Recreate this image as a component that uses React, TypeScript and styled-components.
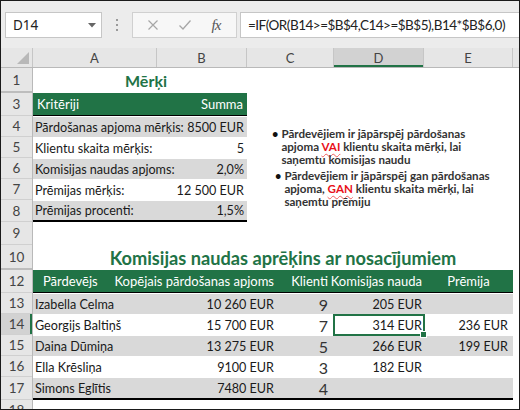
import React from "react";
import styled, { createGlobalStyle } from "styled-components";

const GlobalStyle = createGlobalStyle`
  html, body { margin: 0; padding: 0; background: #fff; }
  body { width: 520px; height: 410px; overflow: hidden; font-family: Lato, "Liberation Sans", sans-serif; }
  * { box-sizing: border-box; }
`;

const GREEN = "#217346";
const BAND = "#d9d9d9";
const CELL_FONT = `Lato, "Liberation Sans", sans-serif`;

const Frame = styled.div`
  width: 520px;
  height: 410px;
  border: 1px solid #1a1a1a;
  display: flex;
  flex-direction: column;
  overflow: hidden;
  background: #fff;
`;

/* ---------- formula bar ---------- */
const FormulaBar = styled.div`
  height: 47px;
  flex: none;
  background: #ececec;
  display: flex;
  align-items: flex-start;
  padding: 11px 0 0 4px;
`;

const NameBox = styled.div`
  width: 97px;
  height: 26px;
  background: #fff;
  border: 1px solid #c6c6c6;
  display: flex;
  align-items: center;
  justify-content: space-between;
  padding: 0 5px 0 7px;
  font-family: "Noto Sans", "Open Sans", sans-serif;
  font-size: 13.5px;
  color: #222;
`;

const Dots = styled.div`
  width: 30px;
  height: 26px;
  display: flex;
  flex-direction: column;
  align-items: center;
  justify-content: center;
  gap: 3px;
  & > span {
    width: 2px;
    height: 2px;
    background: #9a9a9a;
  }
`;

const FxBox = styled.div`
  width: 105px;
  height: 26px;
  background: #f7f7f7;
  border: 1px solid #d0d0d0;
  display: flex;
  align-items: center;
  justify-content: space-around;
  padding: 0 6px 0 4px;
`;

const FxLabel = styled.span`
  font-family: "Liberation Serif", serif;
  font-style: italic;
  font-size: 15px;
  color: #555;
  letter-spacing: -1px;
`;

const FormulaInput = styled.div`
  flex: 1;
  height: 26px;
  margin-left: 3px;
  background: #fff;
  border: 1px solid #c6c6c6;
  border-right: none;
  display: flex;
  align-items: center;
  padding-left: 7px;
  font-family: Lato, "Liberation Sans", sans-serif;
  font-size: 13.5px;
  letter-spacing: -0.5px;
  color: #222;
  white-space: nowrap;
  overflow: hidden;
`;

/* ---------- column headers ---------- */
const ColHeaderRow = styled.div`
  height: 20px;
  flex: none;
  display: flex;
  background: #e6e6e6;
  border-bottom: 1px solid #b9b9b9;
`;

const Corner = styled.div`
  width: 32px;
  flex: none;
  border-right: 1px solid #c6c6c6;
  display: flex;
  align-items: flex-end;
  justify-content: flex-end;
  padding: 0 3px 3px 0;
`;

const ColHead = styled.div<{ $w: number; $active?: boolean }>`
  width: ${(p) => p.$w}px;
  flex: none;
  display: flex;
  align-items: center;
  justify-content: center;
  border-right: 1px solid #c6c6c6;
  background: ${(p) => (p.$active ? "#d2d2d2" : "transparent")};
  box-shadow: ${(p) => (p.$active ? `inset 0 -2px 0 ${GREEN}` : "none")};
  font-family: ${CELL_FONT};
  font-size: 13px;
  color: #444;
`;

/* ---------- body ---------- */
const Body = styled.div`
  flex: 1;
  display: flex;
  min-height: 0;
`;

const RowHeaders = styled.div`
  width: 32px;
  flex: none;
  display: flex;
  flex-direction: column;
  background: #e6e6e6;
  border-right: 1px solid #b9b9b9;
`;

const RowHead = styled.div<{ $h: number; $hiddenBelow?: boolean; $active?: boolean }>`
  height: ${(p) => p.$h}px;
  flex: none;
  display: flex;
  align-items: center;
  justify-content: center;
  border-bottom: ${(p) => (p.$hiddenBelow ? "2px solid #bdbdbd" : "1px solid #d0d0d0")};
  background: ${(p) => (p.$active ? "#d2d2d2" : "transparent")};
  box-shadow: ${(p) => (p.$active ? `inset -2px 0 0 ${GREEN}` : "none")};
  font-family: ${CELL_FONT};
  font-size: 13.5px;
  color: #444;
`;

const Sheet = styled.div`
  flex: 1;
  display: flex;
  flex-direction: column;
  min-width: 0;
`;

const TopSection = styled.div`
  display: flex;
`;

const TargetsTable = styled.div`
  width: 214px;
  flex: none;
  display: flex;
  flex-direction: column;
`;

const Title = styled.div<{ $h: number; $size: number; $shift?: number }>`
  height: ${(p) => p.$h}px;
  display: flex;
  align-items: center;
  justify-content: center;
  padding-left: ${(p) => p.$shift ?? 0}px;
  font-family: ${CELL_FONT};
  font-weight: 700;
  font-size: ${(p) => p.$size}px;
  color: ${GREEN};
  white-space: nowrap;
`;

const HeaderBand = styled.div<{ $h: number; $cols: string }>`
  height: ${(p) => p.$h}px;
  display: grid;
  grid-template-columns: ${(p) => p.$cols};
  align-items: center;
  background: ${GREEN};
  border-bottom: 1px solid #000;
  color: #fff;
  font-family: ${CELL_FONT};
  font-size: 13px;
  white-space: nowrap;
`;

const DataRow = styled.div<{ $h: number; $cols: string; $band?: boolean; $last?: boolean }>`
  height: ${(p) => p.$h}px;
  display: grid;
  grid-template-columns: ${(p) => p.$cols};
  align-items: center;
  background: ${(p) => (p.$band ? BAND : "#fff")};
  border-top: 1px solid #fff;
  border-bottom: ${(p) => (p.$last ? "2px solid #000" : "none")};
  font-family: ${CELL_FONT};
  font-size: 12.6px;
  color: #1a1a1a;
  white-space: nowrap;
`;

const Cell = styled.div<{ $align?: "left" | "right" | "center"; $pad?: number; $big?: boolean; $selected?: boolean }>`
  position: relative;
  height: 100%;
  display: flex;
  align-items: center;
  justify-content: ${(p) =>
    p.$align === "right" ? "flex-end" : p.$align === "center" ? "center" : "flex-start"};
  padding: 0 ${(p) => (p.$align === "right" ? p.$pad ?? 3 : 0)}px 0
    ${(p) => (p.$align === "left" || !p.$align ? p.$pad ?? 2 : 0)}px;
  font-size: ${(p) => (p.$big ? "16px" : "inherit")};
  color: ${(p) => (p.$big ? "#333" : "inherit")};
  overflow: visible;
  ${(p) =>
    p.$selected &&
    `
    outline: 2px solid ${GREEN};
    outline-offset: -1px;
    &::after {
      content: "";
      position: absolute;
      right: -3px;
      bottom: -3px;
      width: 5px;
      height: 5px;
      background: ${GREEN};
      border: 1px solid #fff;
    }
  `}
`;

const Notes = styled.ul`
  flex: 1;
  margin: 0;
  padding: 59px 0 0 25px;
  list-style: none;
  display: flex;
  flex-direction: column;
  gap: 3px;
  font-family: Lato, "Open Sans", sans-serif;
  font-weight: 700;
  font-size: 11.6px;
  line-height: 13px;
  color: #333;
`;

const NoteItem = styled.li<{ $indent: number }>`
  display: flex;
  gap: 3px;
  margin-left: ${(p) => p.$indent}px;
  &::before {
    content: "•";
    color: #111;
    font-size: 11px;
  }
`;

const NoteText = styled.span`
  flex: none;
  display: flex;
  flex-direction: column;
`;

const NoteLine = styled.span`
  display: block;
  height: 13px;
  white-space: nowrap;
`;

const Alert = styled.span`
  color: #e8101a;
  font-weight: 700;
  text-decoration: underline wavy #f06060;
  text-decoration-thickness: 1px;
  text-underline-offset: 2px;
`;

const Spacer = styled.div<{ $h: number }>`
  height: ${(p) => p.$h}px;
  flex: none;
`;

const CommissionTable = styled.div`
  width: 480px;
  display: flex;
  flex-direction: column;
`;

const WideTitle = styled(Title)`
  width: 500px;
`;

/* ---------- data ---------- */
const columns = [
  { l: "A", w: 124 },
  { l: "B", w: 90 },
  { l: "C", w: 87 },
  { l: "D", w: 90 },
  { l: "E", w: 89 },
];

const rowSpec = [
  { n: "1", h: 25, hidden: true },
  { n: "3", h: 23 },
  { n: "4", h: 21 },
  { n: "5", h: 21 },
  { n: "6", h: 21 },
  { n: "7", h: 21 },
  { n: "8", h: 22 },
  { n: "9", h: 23 },
  { n: "10", h: 25, hidden: true },
  { n: "12", h: 23 },
  { n: "13", h: 21 },
  { n: "14", h: 21, active: true },
  { n: "15", h: 21 },
  { n: "16", h: 21 },
  { n: "17", h: 23 },
  { n: "18", h: 21 },
];

const targets = [
  ["Pārdošanas apjoma mērķis:", "8500 EUR"],
  ["Klientu skaita mērķis:", "5"],
  ["Komisijas naudas apjoms:", "2,0%"],
  ["Prēmijas mērķis:", "12 500 EUR"],
  ["Prēmijas procenti:", "1,5%"],
];

const sales = [
  ["Izabella Celma", "10 260 EUR", "9", "205 EUR", ""],
  ["Georgijs Baltiņš", "15 700 EUR", "7", "314 EUR", "236 EUR"],
  ["Daina Dūmiņa", "13 275 EUR", "5", "266 EUR", "199 EUR"],
  ["Ella Krēsliņa", "9100 EUR", "3", "182 EUR", ""],
  ["Simons Eglītis", "7480 EUR", "4", "", ""],
];

const TOP_COLS = "1fr auto";
const BOTTOM_COLS = "90px 154px 57px 90px 89px";

const CloseIcon = () => (
  <svg width="12" height="12" viewBox="0 0 12 12">
    <path d="M1.5 1.5 L10.5 10.5 M10.5 1.5 L1.5 10.5" stroke="#a6a6a6" strokeWidth="1.2" fill="none" />
  </svg>
);

const CheckIcon = () => (
  <svg width="14" height="12" viewBox="0 0 14 12">
    <path d="M1.5 6.5 L5 10 L12.5 1.5" stroke="#a6a6a6" strokeWidth="1.3" fill="none" />
  </svg>
);

const DropArrow = () => (
  <svg width="8" height="5" viewBox="0 0 8 5">
    <path d="M0 0 H8 L4 4.5 Z" fill="#666" />
  </svg>
);

const CornerTriangle = () => (
  <svg width="12" height="12" viewBox="0 0 12 12">
    <path d="M12 0 V12 H0 Z" fill="#b8b8b8" />
  </svg>
);

export default function App() {
  return (
    <>
      <GlobalStyle />
      <Frame>
        <FormulaBar>
          <NameBox>
            <span>D14</span>
            <DropArrow />
          </NameBox>
          <Dots>
            <span />
            <span />
            <span />
          </Dots>
          <FxBox>
            <CloseIcon />
            <CheckIcon />
            <FxLabel>fx</FxLabel>
          </FxBox>
          <FormulaInput>=IF(OR(B14&gt;=$B$4,C14&gt;=$B$5),B14*$B$6,0)</FormulaInput>
        </FormulaBar>

        <ColHeaderRow>
          <Corner>
            <CornerTriangle />
          </Corner>
          {columns.map((c) => (
            <ColHead key={c.l} $w={c.w} $active={c.l === "D"}>
              {c.l}
            </ColHead>
          ))}
        </ColHeaderRow>

        <Body>
          <RowHeaders>
            {rowSpec.map((r) => (
              <RowHead key={r.n} $h={r.h} $hiddenBelow={r.hidden} $active={r.active}>
                {r.n}
              </RowHead>
            ))}
          </RowHeaders>

          <Sheet>
            <TopSection>
              <TargetsTable>
                <Title $h={25} $size={16} $shift={12}>
                  Mērķi
                </Title>
                <HeaderBand $h={23} $cols={TOP_COLS}>
                  <Cell $pad={4}>Kritēriji</Cell>
                  <Cell $align="right" $pad={4}>
                    Summa
                  </Cell>
                </HeaderBand>
                {targets.map((t, i) => (
                  <DataRow
                    key={t[0]}
                    $h={i === 4 ? 22 : 21}
                    $cols={TOP_COLS}
                    $band={i % 2 === 0}
                    $last={i === 4}
                  >
                    <Cell>{t[0]}</Cell>
                    <Cell $align="right">{t[1]}</Cell>
                  </DataRow>
                ))}
              </TargetsTable>
              <Notes>
                <NoteItem $indent={0}>
                  <NoteText>
                    <NoteLine>Pārdevējiem ir jāpārspēj pārdošanas</NoteLine>
                    <NoteLine>
                      apjoma <Alert>VAI</Alert> klientu skaita mērķi, lai
                    </NoteLine>
                    <NoteLine>saņemtu komisijas naudu</NoteLine>
                  </NoteText>
                </NoteItem>
                <NoteItem $indent={3}>
                  <NoteText>
                    <NoteLine>Pārdevējiem ir jāpārspēj gan pārdošanas</NoteLine>
                    <NoteLine>
                      apjoma, <Alert>GAN</Alert> klientu skaita mērķi, lai
                    </NoteLine>
                    <NoteLine>saņemtu prēmiju</NoteLine>
                  </NoteText>
                </NoteItem>
              </Notes>
            </TopSection>

            <Spacer $h={23} />
            <WideTitle $h={25} $size={18.2} $shift={0}>
              Komisijas naudas aprēķins ar nosacījumiem
            </WideTitle>

            <CommissionTable>
              <HeaderBand $h={23} $cols={BOTTOM_COLS}>
                <Cell $pad={10}>Pārdevējs</Cell>
                <Cell $align="right" $pad={3}>
                  Kopējais pārdošanas apjoms
                </Cell>
                <Cell $align="right" $pad={6}>
                  Klienti
                </Cell>
                <Cell $align="right" $pad={2}>
                  Komisijas nauda
                </Cell>
                <Cell $align="center">Prēmija</Cell>
              </HeaderBand>
              {sales.map((s, i) => (
                <DataRow
                  key={s[0]}
                  $h={i === 4 ? 23 : 21}
                  $cols={BOTTOM_COLS}
                  $band={i % 2 === 0}
                  $last={i === 4}
                >
                  <Cell>{s[0]}</Cell>
                  <Cell $align="right">{s[1]}</Cell>
                  <Cell $align="right" $pad={6} $big>
                    {s[2]}
                  </Cell>
                  <Cell $align="right" $pad={2} $selected={i === 1}>
                    {s[3]}
                  </Cell>
                  <Cell $align="right" $pad={5}>
                    {s[4]}
                  </Cell>
                </DataRow>
              ))}
            </CommissionTable>
          </Sheet>
        </Body>
      </Frame>
    </>
  );
}
